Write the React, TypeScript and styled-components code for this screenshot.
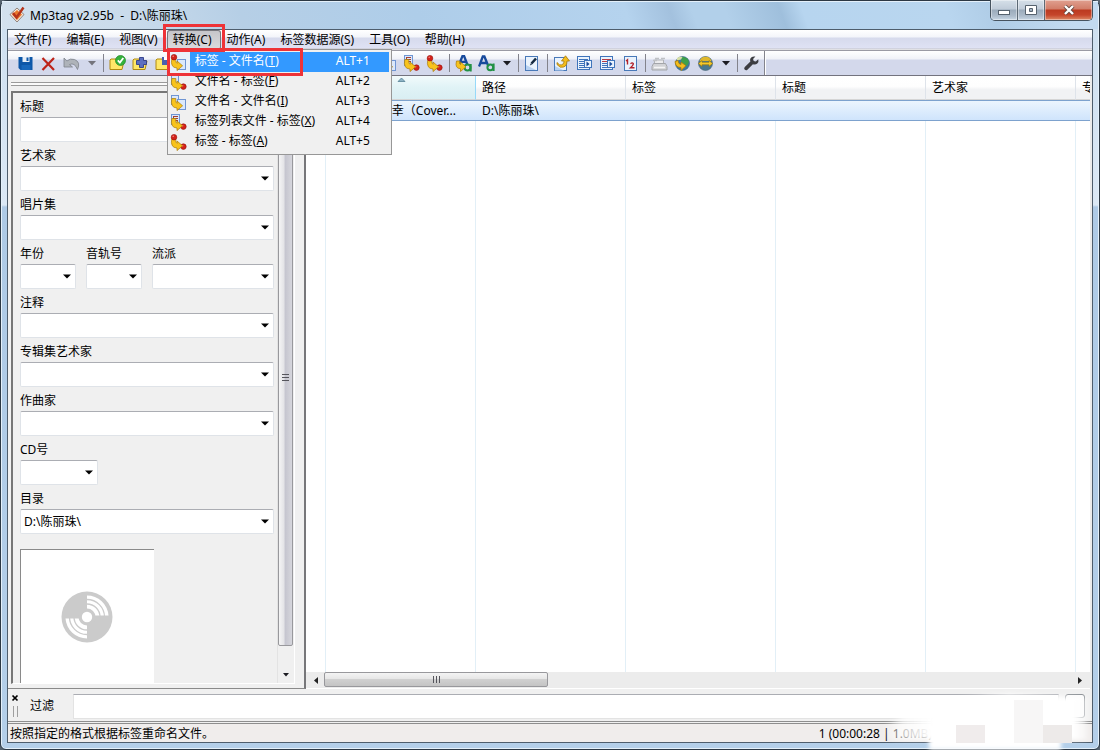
import React from "react";
import styled, { createGlobalStyle, css } from "styled-components";

const GlobalStyle = createGlobalStyle`
  *, *::before, *::after { box-sizing: border-box; }
  body {
    margin: 0;
    background: #56636f;
    color: #000;
    font: 12px/16px "Noto Sans", "Noto Sans CJK SC", sans-serif;
  }
  svg { display: block; }
  button, input, select {
    margin: 0;
    padding: 0;
    border: 0;
    border-radius: 0;
    background: none;
    color: inherit;
    font: inherit;
  }
`;

/* ---------- window frame ---------- */

const Frame = styled.div`
  position: relative;
  display: flex;
  flex-direction: column;
  min-height: 100vh;
  padding: 0 6px 6px;
  border: 1px solid #2c3844;
  border-radius: 7px 7px 6px 6px;
  background: linear-gradient(180deg, #c3d8ea 0, #cfe0f0 30px, #dbe8f5 204px, #aecae6 206px, #b4cfe9 100%);
  box-shadow: inset 0 0 0 1px #e4f0fa;
`;

const TitleBar = styled.header`
  display: flex;
  align-items: flex-start;
  height: 28px;
  margin: 0 -5px;
  padding-left: 7px;
  border-top: 1px solid #e4f0fa;
  background: linear-gradient(70deg, #d3e1ee 0, #c9dbeb 12%, #b6cfe6 22%, #aecde9 38%, #b5d3ee 57%, #a3c1de 61%, #b2d0ea 63%, #b2d0ea 66%, #9fbfdc 71%, #b7d5ef 73%, #b9d6ef 86%, #b0cde7 90%, #c2daf0 97%);
`;

const Title = styled.h1`
  flex: 1;
  margin: 0;
  padding: 4px 0 0 4px;
  font-size: 12px;
  font-weight: 400;
  line-height: 20px;
  white-space: pre;
`;

const AppIcon = styled.svg`
  margin-top: 4px;
`;

const WindowButtons = styled.div`
  display: flex;
  margin: -2px 5px 0 0;
  border: 1px solid #46535f;
  border-top: 0;
  border-radius: 0 0 5px 5px;
  overflow: hidden;
`;

const WindowButton = styled.button<{ $danger?: boolean }>`
  display: flex;
  align-items: center;
  justify-content: center;
  width: ${(p) => (p.$danger ? 47 : 27)}px;
  height: 20px;
  border-right: ${(p) => (p.$danger ? 0 : 1)}px solid #5c6975;
  background: ${(p) =>
    p.$danger
      ? "linear-gradient(180deg, #e0a090 0, #d27d69 45%, #bb3a20 50%, #c5452a 75%, #dd8a66 100%)"
      : "linear-gradient(180deg, #d6e0e9 0, #c0ccd9 45%, #9babbb 50%, #adbccb 80%, #c9d8e6 100%)"};
  box-shadow: inset 0 0 0 1px rgba(255, 255, 255, 0.4);
`;

const Client = styled.div`
  display: flex;
  flex: 1;
  flex-direction: column;
  border: 1px solid #4e5d6c;
  background: #f0f0f0;
`;

/* ---------- menu bar ---------- */

const MenuBar = styled.nav`
  display: flex;
  height: 21px;
  border-bottom: 1px solid #9a9aa4;
  background: linear-gradient(180deg, #fff 0, #f3f5fa 7px, #d6daec 8px, #dfe2f4 18px, #c3c3c9 19px, #fff 20px);
`;

const MenuSlot = styled.div`
  position: relative;
  display: flex;
`;

const MenuButton = styled.button<{ $open?: boolean }>`
  height: 20px;
  padding: 0 9px 0 6px;
  line-height: 20px;
  white-space: nowrap;
  ${(p) =>
    p.$open &&
    css`
      border-radius: 3px;
      background: linear-gradient(180deg, #c4c4c8, #dcdcdf);
      box-shadow: inset 0 0 0 1px #77777d;
    `}
`;

const DropMenu = styled.ul`
  position: absolute;
  z-index: 10;
  top: 19px;
  left: 0;
  width: 225px;
  margin: 0;
  padding: 2px 2px 2px 0;
  border: 1px solid #979797;
  background: #f0f0f0;
  list-style: none;
`;

const MenuItem = styled.li<{ $active?: boolean }>`
  position: relative;
  color: ${(p) => (p.$active ? "#fff" : "#000")};
  background: ${(p) => (p.$active ? "#3399ff" : "none")};
`;

const MenuItemButton = styled.button`
  display: grid;
  grid-template-columns: 22px 1fr 53px;
  width: 100%;
  height: 20px;
  column-gap: 5px;
  line-height: 18px;
  text-align: left;
  white-space: nowrap;
`;

const MenuIconBox = styled.span<{ $active?: boolean }>`
  display: flex;
  align-items: center;
  justify-content: center;
  height: 20px;
  background: ${(p) => (p.$active ? "#e9f0fa" : "none")};
`;

const Highlight = styled.span<{ $kind: "button" | "item" }>`
  position: absolute;
  z-index: 11;
  border: 3px solid #ee3338;
  pointer-events: none;
  ${(p) => (p.$kind === "button" ? "inset: -6px -4px -2px -4px;" : "top: -4px; left: -1px; width: 136px; height: 28px;")}
`;

/* ---------- toolbar ---------- */

const ToolBar = styled.div`
  display: flex;
  height: 25px;
  padding-left: 6px;
  border-bottom: 1px solid #73737e;
  background: linear-gradient(180deg, #fff 0, #f0f2f8 8px, #d3d8eb 9px, #d3d8eb 100%);
`;

const ToolButton = styled.button`
  display: flex;
  align-items: center;
  justify-content: center;
  width: 23px;
  height: 24px;
`;

const ToolDrop = styled(ToolButton)`
  width: 17px;
`;

const Separator = styled.span`
  width: 6px;
  height: 18px;
  margin-top: 3px;
  background: linear-gradient(90deg, transparent 3px, #83838c 3px, #83838c 4px, transparent 4px);
`;

const ToolEnd = styled.span`
  width: 2px;
  margin-left: 1px;
  border-left: 1px solid #83838c;
  background: #fff;
`;

/* ---------- tag panel ---------- */

const Body = styled.main`
  display: flex;
  flex: 1;
  min-height: 0;
`;

const Dock = styled.aside`
  display: flex;
  flex: none;
  flex-direction: column;
  width: 298px;
  padding: 6px 9px 4px 3px;
  border-right: 2px solid #77777a;
  border-bottom: 1px solid #8a8a8a;
`;

const DockGrip = styled.div`
  height: 4px;
  margin-bottom: 5px;
  border-top: 1px solid #9a9a9a;
  border-bottom: 1px solid #9a9a9a;
  background: #fbfbfb;
`;

const Panel = styled.div`
  display: flex;
  flex: 1;
  border: 2px solid #767676;
  border-right: 1px solid #fff;
  border-bottom: 1px solid #fff;
`;

const TagForm = styled.form`
  display: flex;
  flex: 1;
  flex-direction: column;
  padding: 0 3px 0 7px;
`;

const FieldRow = styled.div`
  display: flex;
  gap: 10px;
`;

const Field = styled.div<{ $width?: number }>`
  position: relative;
  flex: ${(p) => (p.$width ? `0 0 ${p.$width}px` : 1)};
`;

const FieldLabel = styled.label`
  display: block;
  height: 24px;
  padding-top: 6px;
`;

const boxStyle = css`
  display: block;
  width: 100%;
  height: 25px;
  padding: 0 3px;
  border: 1px solid #dfe3e8;
  border-top-color: #abadb3;
  border-radius: 2px;
  background: #fff;
`;

const TextInput = styled.input`
  ${boxStyle}
`;

const Combo = styled.select`
  ${boxStyle}
  appearance: none;
  padding-right: 16px;
`;

const ComboArrow = styled.svg`
  position: absolute;
  right: 5px;
  bottom: 10px;
  pointer-events: none;
`;

const Cover = styled.div`
  display: flex;
  flex: 1;
  align-items: center;
  justify-content: center;
  width: 134px;
  min-height: 134px;
  margin-top: 15px;
  padding-right: 2px;
  border-top: 1px solid #8a8a8a;
  border-left: 1px solid #8a8a8a;
  background: #fff;
`;

const VScroll = styled.div`
  display: flex;
  flex: none;
  flex-direction: column;
  width: 17px;
  padding-right: 2px;
  border-left: 1px solid #e3e3e3;
  background: #f0f0f0;
`;

const ScrollButton = styled.button`
  display: flex;
  flex: none;
  align-items: center;
  justify-content: center;
  width: 16px;
  height: 16px;
`;

const VTrack = styled.div`
  flex: 1;
  padding-bottom: 21px;
`;

const VThumb = styled.div`
  display: flex;
  align-items: center;
  justify-content: center;
  width: 15px;
  height: 100%;
  border: 1px solid #98989c;
  border-radius: 2px;
  background: linear-gradient(90deg, #f4f4f5 0, #e5e5e8 35%, #c6c6d0 50%, #d6d6dc 100%);
`;

/* ---------- file list ---------- */

const COLS = [20, 150, 150, 150, 150, 150];

const ListPane = styled.section`
  display: flex;
  flex: 1;
  flex-direction: column;
  min-width: 0;
  border-right: 2px solid #ececec;
  background: #fff;
`;

const FileTable = styled.table`
  width: 100%;
  table-layout: fixed;
  border-collapse: separate;
  border-spacing: 0;
`;

const HeadCell = styled.th<{ $sorted?: boolean }>`
  position: relative;
  height: 24px;
  padding: 0 6px;
  overflow: hidden;
  border-right: 1px solid ${(p) => (p.$sorted ? "#96d9f9" : "#dee3ea")};
  border-bottom: 1px solid #d5d5d5;
  background: ${(p) =>
    p.$sorted ? "linear-gradient(180deg, #f2fafb 0, #e0f3f6 50%, #d9eef3 100%)" : "linear-gradient(180deg, #fff 0, #fefefe 45%, #f1f2f4 60%, #f1f2f4 100%)"};
  font-weight: 400;
  line-height: 22px;
  text-align: left;
  white-space: nowrap;
  &:last-child { border-right: 0; }
`;

const SortMark = styled.svg`
  position: absolute;
  top: 1px;
  left: 71px;
`;

const Cell = styled.td`
  height: 21px;
  padding: 0 6px;
  overflow: hidden;
  border-top: 1px solid #7da2ce;
  border-bottom: 1px solid #7da2ce;
  background: linear-gradient(180deg, #ecf5fe, #cfe4fc);
  line-height: 19px;
  white-space: nowrap;
`;

const Columns = styled.div`
  display: grid;
  flex: 1;
  grid-template-columns: ${COLS.map((c) => `${c}px`).join(" ")} 1fr;
`;

const ColumnLine = styled.span`
  border-right: 1px solid #e2eff7;
`;

const HScroll = styled.div`
  display: flex;
  height: 17px;
  padding: 0 2px;
  border-bottom: 1px solid #fff;
  background: #ececec;
`;

const HTrack = styled.div`
  flex: 1;
`;

const HThumb = styled.div`
  display: flex;
  align-items: center;
  justify-content: center;
  width: 30%;
  min-width: 40px;
  height: 15px;
  border: 1px solid #98989c;
  border-radius: 2px;
  background: linear-gradient(180deg, #f4f4f4 0, #e6e6e6 45%, #d0d0d0 50%, #c4c4c4 100%);
`;

/* ---------- filter and status ---------- */

const FilterBar = styled.div`
  display: flex;
  height: 35px;
  padding: 5px 7px 0 3px;
  border-bottom: 3px double #8e8e8e;
`;

const FilterGrip = styled.div`
  display: flex;
  flex-direction: column;
  gap: 4px;
  width: 19px;
`;

const CloseButton = styled.button`
  width: 8px;
  height: 8px;
`;

const GripLines = styled.span`
  width: 5px;
  height: 11px;
  margin-left: 2px;
  border-right: 1px solid #9f9f9f;
  border-left: 1px solid #9f9f9f;
`;

const FilterLabel = styled.label`
  width: 43px;
  line-height: 24px;
`;

const FilterInput = styled.input`
  flex: 1;
  min-width: 0;
  height: 25px;
  padding: 0 4px;
  border: 1px solid #e3e3e3;
  border-top-color: #abadb3;
  background: #fff;
`;

const FilterButton = styled.button`
  width: 20px;
  height: 24px;
  margin-left: 6px;
  border: 1px solid #8a8f94;
  border-radius: 3px;
  background: #fbfbfb;
`;

const StatusBar = styled.footer`
  display: flex;
  justify-content: space-between;
  height: 18px;
  padding: 0 160px 0 2px;
  background: #f0edec;
  line-height: 20px;
  white-space: nowrap;
`;

const Veil = styled.svg`
  position: absolute;
  z-index: 5;
  right: 0;
  bottom: -1px;
  pointer-events: none;
`;

/* ---------- drawings ---------- */

const YELLOW = "#f3bd1e";
const YELLOW_EDGE = "#a87a08";

const Page = ({ x, y, w = 9, h = 10 }: { x: number; y: number; w?: number; h?: number }) => (
  <rect x={x + 0.5} y={y + 0.5} width={w - 1} height={h - 1} fill="#dbe8fb" stroke="#6f95d3" />
);
const Dot = ({ x, y }: { x: number; y: number }) => (
  <g>
    <circle cx={x} cy={y} r="2.8" fill="#d3221b" stroke="#991008" strokeWidth=".6" />
    <circle cx={x - 0.8} cy={y - 0.9} r=".8" fill="#f58a80" />
  </g>
);
const CurveArrow = () => (
  <path
    d="M1.800 4.500Q0 13.800 7 14v2.600l5.600-4.800L7 7v2.400Q5.400 9 5.800 4.500z"
    fill="#f8c31c"
    stroke={YELLOW_EDGE}
    strokeWidth=".7"
  />
);
const Folder = () => (
  <path d="M1 5 V14.5 H13 L15 6 H8 L7 4 H2 Z" fill="#ffe768" stroke="#b08a10" strokeWidth="1" />
);

type ConvertKind = "tagFile" | "fileTag" | "fileFile" | "listTag" | "tagTag";

const ConvertIcon = ({ kind }: { kind: ConvertKind }) => (
  <svg width="17" height="17" viewBox="0 0 17 17" aria-hidden="true">
    {(kind === "fileTag" || kind === "fileFile") && <Page x={1} y={1} w={8} h={10} />}
    {kind === "listTag" && (
      <g>
        <Page x={1} y={0} w={9} h={11} />
        <path d="M3 2.5h5M3 4.5h5M5 6.5h3M3.5 2v5" stroke="#a0413a" fill="none" />
      </g>
    )}
    {(kind === "tagFile" || kind === "fileFile") && <Page x={7} y={5} w={9} h={11} />}
    {kind !== "tagFile" && kind !== "fileFile" && <Dot x={13.4} y={12.6} />}
    <CurveArrow />
    {(kind === "tagFile" || kind === "tagTag") && <Dot x={4} y={3.2} />}
  </svg>
);

const Caret = ({ muted, small }: { muted?: boolean; small?: boolean }) => (
  <svg width="8" height="5" viewBox="0 0 8 5" aria-hidden="true">
    <path d={small ? "M1 0h6L4 3.5z" : "M0 0h8L4 4.5z"} fill={muted ? "#74747c" : "#1c1c22"} />
  </svg>
);

const Svg = ({ children }: { children: React.ReactNode }) => (
  <svg width="17" height="17" viewBox="0 0 17 17" aria-hidden="true">
    {children}
  </svg>
);

const icons: Record<string, React.ReactNode> = {
  save: (
    <Svg>
      <path d="M1.500 2h14v13H3.500l-2-2z" fill="#0d57a8" />
      <path d="M5.500 2h7v5h-7z" fill="#e6eef8" />
      <path d="M9.500 2.500h2v3.500h-2z" fill="#0d57a8" />
      <path d="M4.500 15v-5h9v5" fill="#1767bb" />
    </Svg>
  ),
  remove: (
    <Svg>
      <path d="M2.500 3L14 15M14 3L2.500 15" stroke="#bd2318" strokeWidth="2.200" fill="none" />
    </Svg>
  ),
  undo: (
    <Svg>
      <path d="M1 3v9h8.500L6.500 9.600Q11.500 7 14.500 14.500Q18 7 11.500 4.500Q7 3 3.900 6z" fill="#aeb3b9" stroke="#7d838b" strokeWidth=".8" />
    </Svg>
  ),
  folderCheck: (
    <Svg>
      <Folder />
      <circle cx="11.500" cy="5.500" r="5" fill="#35b23c" stroke="#1d8425" strokeWidth=".7" />
      <path d="M8.800 5.300l2.100 2.200L14.300 3" stroke="#fff" strokeWidth="1.800" fill="none" />
    </Svg>
  ),
  folderPlus: (
    <Svg>
      <Folder />
      <path d="M7.500 2.500h4v3h3v4h-3v3h-4v-3h-3v-4h3z" fill="#5d6fc0" stroke="#2f3c88" strokeWidth=".9" />
    </Svg>
  ),
  folderSave: (
    <Svg>
      <Folder />
      <rect x="7" y="2" width="8" height="8" fill="#4a5fae" />
      <rect x="9" y="2" width="4" height="3" fill="#fff" />
    </Svg>
  ),
  refresh: (
    <Svg>
      <path d="M3 9a5.500 5.500 0 0 1 10-3M14 8a5.500 5.500 0 0 1-10 3" stroke="#2b8a3a" strokeWidth="2" fill="none" />
    </Svg>
  ),
  list: (
    <Svg>
      <Page x={2} y={2} w={13} h={13} />
      <path d="M4 5.500h9M4 8.500h9M4 11.500h9" stroke="#2f62ad" />
    </Svg>
  ),
  caseConvert: (
    <Svg>
      <path d="M4 9.500L7.500 1h1.600L12.500 10M5.500 6.800h5.500" stroke="#174a9c" strokeWidth="2.300" fill="none" />
      <circle cx="12.500" cy="12.500" r="2.900" fill="none" stroke="#239145" strokeWidth="2" />
      <path d="M15.700 9v7.500" stroke="#239145" strokeWidth="2" />
      <path d="M1.500 6Q-.5 13.500 5.500 13.700v2.800l5.500-4.700L5.500 7v2.600Q4.300 9.500 4.800 6z" fill="#f8c31c" stroke={YELLOW_EDGE} strokeWidth=".7" />
    </Svg>
  ),
  caseMenu: (
    <Svg>
      <path d="M1 11.500L4.800 1.500h1.600L10.500 11.500M2.500 8h6.500" stroke="#174a9c" strokeWidth="2.300" fill="none" />
      <circle cx="12.300" cy="12.300" r="2.900" fill="none" stroke="#239145" strokeWidth="2" />
      <path d="M15.600 8.500v7.500" stroke="#239145" strokeWidth="2" />
    </Svg>
  ),
  edit: (
    <Svg>
      <rect x="1.500" y="1.500" width="12" height="14" fill="#eaf3fd" stroke="#4979b8" />
      <path d="M2 10l10 5H2z" fill="#b8d2f2" />
      <path d="M7.500 8.500L12 3.500" stroke="#14293f" strokeWidth="2.600" />
      <path d="M5.800 10.500l1.200-2.500 1.300 1.300z" fill="#14293f" />
    </Svg>
  ),
  editArrow: (
    <Svg>
      <rect x="1.500" y="2.500" width="12" height="13" fill="#eaf3fd" stroke="#4979b8" />
      <path d="M2 11l9 4.500H2z" fill="#b8d2f2" />
      <path d="M4 7.500l2.500 2.300Q11 10.500 11 6H8.500L12.500.8 16.500 6H14q.2 7-6.800 6.200L4 9.500z" fill={YELLOW} stroke={YELLOW_EDGE} strokeWidth=".8" />
    </Svg>
  ),
  copyPage: (
    <Svg>
      <rect x="1.500" y="1.500" width="12" height="13" fill="#eaf3fd" stroke="#3f74bb" />
      <path d="M3 4.500h9M3 6.500h5M3 8.500h5M3 10.500h5M3 12.500h9" stroke="#3f74bb" />
      <rect x="8.500" y="5.500" width="7" height="7" fill="#eaf3fd" stroke="#3f74bb" />
      <path d="M10.500 6.500v5l3-2.500z" fill="#174a9c" />
    </Svg>
  ),
  pastePage: (
    <Svg>
      <rect x="1.500" y="1.500" width="12" height="13" fill="#eaf3fd" stroke="#3f74bb" />
      <path d="M3 4.500h9M3 6.500h5" stroke="#b53b45" />
      <path d="M3 8.500h5M3 10.500h5M3 12.500h9" stroke="#3f74bb" />
      <rect x="8.500" y="5.500" width="7" height="7" fill="#eaf3fd" stroke="#3f74bb" />
      <path d="M10.500 6.500v5l3-2.500z" fill="#174a9c" />
    </Svg>
  ),
  numbering: (
    <Svg>
      <rect x="2.500" y="1.500" width="12" height="14" fill="#eaf3fd" stroke="#4979b8" />
      <path d="M4 6l1.500-1.300V9.500M8.500 8.700q1.800-1.600 2.800 0Q11.500 10.200 8.500 12.700h4" stroke="#b2222b" strokeWidth="1.400" fill="none" />
    </Svg>
  ),
  printer: (
    <Svg>
      <path d="M3.500 9V5h9v4" fill="#ececee" stroke="#b1b3b7" />
      <path d="M4 3.500h4M10 3.500h4M2 5.500h4" stroke="#bfc1c5" strokeWidth="1.600" />
      <path d="M2.500 8.500h12l1.500 3v3.500H1v-3.500z" fill="#d2d3d6" stroke="#a3a5a9" />
      <path d="M3 12.500h11" stroke="#f5f5f6" strokeWidth="1.500" />
    </Svg>
  ),
  globeArrow: (
    <Svg>
      <circle cx="8.500" cy="8.500" r="7" fill="#3d78a2" stroke="#375f7a" strokeWidth=".6" />
      <path d="M8 1.800q6 .2 7 5.200l-2 4-4-1-2-4z" fill="#3ea04b" />
      <path d="M3 3q3-2 5.500-1L7 4.500 3 5.500z" fill="#d6dfa5" />
      <path d="M1 6.500Q1.500 12.500 7 12.500v3l5-4.800L7 7v2.500Q4.500 9.300 4 5.500z" fill={YELLOW} stroke={YELLOW_EDGE} strokeWidth=".8" />
    </Svg>
  ),
  globe: (
    <Svg>
      <circle cx="8.500" cy="8.500" r="7" fill="#49788f" stroke="#466173" strokeWidth=".6" />
      <path d="M2.500 6Q4 1.800 8.500 1.700T14.500 6z" fill="#e0b82c" />
      <path d="M1.500 8.500l3.500-3v1.700h7V5.500l3.500 3-3.500 3V9.800H5v1.700z" fill="#f7c928" stroke="#98780f" strokeWidth=".7" />
    </Svg>
  ),
  wrench: (
    <Svg>
      <path
        d="M15.300 4.200l-2.500 2.300-2.100-.5-.6-2.100L12.400 1.600Q8.800.9 7.400 3.500q-.7 1.500 0 3.100L1.800 12q-1.200 1.300-.2 2.600 1.300 1.300 2.800.2l5.500-5.600q2.500.9 4.400-.7 1.700-1.700 1-4.300z"
        fill="#3c3d42"
      />
    </Svg>
  ),
};

const Sep = "|";
const Drop = "v";
type Tool = [id: string, label: string];

const toolItems: (Tool | string)[] = [
  ["save", "保存标签"], ["remove", "移除标签"], ["undo", "撤消"], Drop, Sep,
  ["folderCheck", "更改目录"], ["folderPlus", "添加目录"], ["folderSave", "收藏目录"], Sep,
  ["list", "播放列表"], ["refresh", "刷新"], ["list", "选择全部"], Sep,
  ["editArrow", "剪切"], ["copyPage", "复制"], ["pastePage", "粘贴"], Sep,
  ["tagFile", "标签 - 文件名"], ["fileTag", "文件名 - 标签"], ["fileFile", "文件名 - 文件名"],
  ["listTag", "标签列表文件 - 标签"], ["tagTag", "标签 - 标签"], Sep,
  ["caseConvert", "动作"], ["caseMenu", "快速动作"], Drop, Sep,
  ["edit", "扩展标签"], Sep,
  ["editArrow", "编辑"], ["copyPage", "复制标签"], ["pastePage", "粘贴标签"], ["numbering", "音轨号向导"], Sep,
  ["printer", "打印"], ["globeArrow", "标签数据源"], ["globe", "网络数据源"], Drop, Sep,
  ["wrench", "选项"],
];

const convertKinds = ["tagFile", "fileTag", "fileFile", "listTag", "tagTag"];

const menuEntries: { kind: ConvertKind; text: string; mnemonic: string; shortcut: string }[] = [
  { kind: "tagFile", text: "标签 - 文件名", mnemonic: "T", shortcut: "ALT+1" },
  { kind: "fileTag", text: "文件名 - 标签", mnemonic: "F", shortcut: "ALT+2" },
  { kind: "fileFile", text: "文件名 - 文件名", mnemonic: "I", shortcut: "ALT+3" },
  { kind: "listTag", text: "标签列表文件 - 标签", mnemonic: "X", shortcut: "ALT+4" },
  { kind: "tagTag", text: "标签 - 标签", mnemonic: "A", shortcut: "ALT+5" },
];

const menus = ["文件(F)", "编辑(E)", "视图(V)", "转换(C)", "动作(A)", "标签数据源(S)", "工具(O)", "帮助(H)"];

const ComboField = ({ id, label, width, value = "" }: { id: string; label: string; width?: number; value?: string }) => (
  <Field $width={width}>
    <FieldLabel htmlFor={id}>{label}</FieldLabel>
    <Combo id={id} defaultValue={value}>
      <option value={value}>{value}</option>
    </Combo>
    <ComboArrow width="8" height="5" viewBox="0 0 8 5" aria-hidden="true">
      <path d="M0 0.500h8L4 4.500z" fill="#000" />
    </ComboArrow>
  </Field>
);

const ConvertMenu = () => (
  <DropMenu>
    {menuEntries.map((m, i) => (
      <MenuItem key={m.kind} $active={i === 0}>
        <MenuItemButton>
          <MenuIconBox $active={i === 0}>
            <ConvertIcon kind={m.kind} />
          </MenuIconBox>
          <span>
            {m.text}(<u>{m.mnemonic}</u>)
          </span>
          <span>{m.shortcut}</span>
        </MenuItemButton>
        {i === 0 && <Highlight $kind="item" />}
      </MenuItem>
    ))}
  </DropMenu>
);

const CoverDisc = () => (
  <svg width="52" height="52" viewBox="-26 -26 52 52" aria-hidden="true">
    <circle r="25.500" fill="#cbcbcb" />
    <path d="M0 0V-21.500A21.500 21.500 0 0 1 21.500 -1.500H0zM0 0V21.500A21.500 21.500 0 0 1 -21.500 1.500H0z" fill="#fff" />
    <path
      d="M0 -17.500A17.500 17.500 0 0 1 17.500 0M0 -13A13 13 0 0 1 13 0M0 17.500A17.500 17.500 0 0 1 -17.500 0M0 13A13 13 0 0 1 -13 0"
      fill="none"
      stroke="#cbcbcb"
      strokeWidth="1.300"
    />
    <circle r="8.500" fill="#cbcbcb" />
    <circle r="5.200" fill="#fff" />
  </svg>
);

export default function App() {
  return (
    <>
      <GlobalStyle />
      <Frame>
        <TitleBar>
          <AppIcon width="17" height="17" viewBox="0 0 17 17" aria-hidden="true">
            <path d="M1 8.500L8 2l7 6.500L8 16z" fill="#f7e6d8" stroke="#7c6a60" strokeWidth=".8" />
            <path d="M3 8.500L8 4l5 4.500L8 14z" fill="#e9782b" />
            <path d="M4 7l3.500 4.500L14.500 1.500" stroke="#b5331a" strokeWidth="2.400" fill="none" />
          </AppIcon>
          <Title>{"Mp3tag v2.95b  -  D:\\陈丽珠\\"}</Title>
          <WindowButtons>
            <WindowButton aria-label="最小化">
              <svg width="13" height="9" viewBox="0 0 13 9">
                <rect x=".5" y="4.500" width="11" height="4" fill="#fff" stroke="#56626e" />
              </svg>
            </WindowButton>
            <WindowButton aria-label="最大化">
              <svg width="12" height="10" viewBox="0 0 12 10">
                <path d="M.5.500h11v9H.5zM4.500 3.500h3v3h-3z" fill="#fff" stroke="#56626e" fillRule="evenodd" />
              </svg>
            </WindowButton>
            <WindowButton $danger aria-label="关闭">
              <svg width="12" height="10" viewBox="0 0 12 10">
                <path d="M2 1l8 8M10 1L2 9" stroke="#64463f" strokeWidth="4" />
                <path d="M2 1l8 8M10 1L2 9" stroke="#fff" strokeWidth="2.400" />
              </svg>
            </WindowButton>
          </WindowButtons>
        </TitleBar>

        <Client>
          <MenuBar>
            {menus.map((m) =>
              m.startsWith("转换") ? (
                <MenuSlot key={m}>
                  <MenuButton $open>{m}</MenuButton>
                  <Highlight $kind="button" />
                  <ConvertMenu />
                </MenuSlot>
              ) : (
                <MenuButton key={m}>{m}</MenuButton>
              ),
            )}
          </MenuBar>

          <ToolBar>
            {toolItems.map((t, i) => {
              if (t === Sep) return <Separator key={i} />;
              if (t === Drop)
                return (
                  <ToolDrop key={i} aria-label="更多">
                    <Caret muted={i === 3} />
                  </ToolDrop>
                );
              const [id, label] = t as Tool;
              return (
                <ToolButton key={i} aria-label={label}>
                  {convertKinds.includes(id) ? <ConvertIcon kind={id as ConvertKind} /> : icons[id]}
                </ToolButton>
              );
            })}
            <ToolEnd />
          </ToolBar>

          <Body>
            <Dock>
              <DockGrip />
              <Panel>
                <TagForm>
                  <FieldRow>
                    <Field>
                      <FieldLabel htmlFor="title">标题</FieldLabel>
                      <TextInput id="title" type="text" />
                    </Field>
                  </FieldRow>
                  <FieldRow><ComboField id="artist" label="艺术家" /></FieldRow>
                  <FieldRow><ComboField id="album" label="唱片集" /></FieldRow>
                  <FieldRow>
                    <ComboField id="year" label="年份" width={56} />
                    <ComboField id="track" label="音轨号" width={56} />
                    <ComboField id="genre" label="流派" />
                  </FieldRow>
                  <FieldRow><ComboField id="comment" label="注释" /></FieldRow>
                  <FieldRow><ComboField id="albumArtist" label="专辑集艺术家" /></FieldRow>
                  <FieldRow><ComboField id="composer" label="作曲家" /></FieldRow>
                  <FieldRow><ComboField id="disc" label="CD号" width={78} /></FieldRow>
                  <FieldRow><ComboField id="directory" label="目录" value={"D:\\陈丽珠\\"} /></FieldRow>
                  <Cover>
                    <CoverDisc />
                  </Cover>
                </TagForm>
                <VScroll>
                  <ScrollButton aria-label="向上">
                    <svg width="7" height="4" viewBox="0 0 7 4"><path d="M0 4h7L3.500 0z" fill="#444" /></svg>
                  </ScrollButton>
                  <VTrack>
                    <VThumb>
                      <svg width="7" height="8" viewBox="0 0 7 8" aria-hidden="true">
                        <path d="M0 .5h7M0 3.500h7M0 6.500h7" stroke="#55555c" />
                      </svg>
                    </VThumb>
                  </VTrack>
                  <ScrollButton aria-label="向下">
                    <Caret small />
                  </ScrollButton>
                </VScroll>
              </Panel>
            </Dock>

            <ListPane>
              <FileTable>
                <colgroup>
                  {COLS.map((w, i) => (
                    <col key={i} width={w} />
                  ))}
                  <col />
                </colgroup>
                <thead>
                  <tr>
                    <HeadCell aria-label="状态" />
                    <HeadCell $sorted aria-sort="ascending" aria-label="文件名">
                      <SortMark width="9" height="5" viewBox="0 0 9 5" aria-hidden="true">
                        <path d="M1 4.500L4.500 1 8 4.500z" fill="#8fb4c6" stroke="#47778c" strokeWidth=".7" />
                      </SortMark>
                    </HeadCell>
                    <HeadCell>路径</HeadCell>
                    <HeadCell>标签</HeadCell>
                    <HeadCell>标题</HeadCell>
                    <HeadCell>艺术家</HeadCell>
                    <HeadCell>专</HeadCell>
                  </tr>
                </thead>
                <tbody>
                  <tr>
                    <Cell />
                    <Cell>01 - 三生有幸（Cover...</Cell>
                    <Cell>{"D:\\陈丽珠\\"}</Cell>
                    <Cell />
                    <Cell />
                    <Cell />
                    <Cell />
                  </tr>
                </tbody>
              </FileTable>
              <Columns>
                {COLS.map((_, i) => (
                  <ColumnLine key={i} />
                ))}
              </Columns>
              <HScroll>
                <ScrollButton aria-label="向左">
                  <svg width="4" height="7" viewBox="0 0 4 7"><path d="M4 0v7L0 3.500z" fill="#222" /></svg>
                </ScrollButton>
                <HTrack>
                  <HThumb>
                    <svg width="9" height="7" viewBox="0 0 9 7" aria-hidden="true">
                      <path d="M1.500 0v7M4.500 0v7M7.500 0v7" stroke="#55555c" />
                    </svg>
                  </HThumb>
                </HTrack>
                <ScrollButton aria-label="向右">
                  <svg width="4" height="7" viewBox="0 0 4 7"><path d="M0 0v7l4-3.500z" fill="#222" /></svg>
                </ScrollButton>
              </HScroll>
            </ListPane>
          </Body>

          <FilterBar>
            <FilterGrip>
              <CloseButton aria-label="关闭过滤">
                <svg width="8" height="8" viewBox="0 0 8 8">
                  <path d="M1.500 1.500l5 5M6.500 1.500l-5 5" stroke="#000" strokeWidth="1.700" />
                </svg>
              </CloseButton>
              <GripLines />
            </FilterGrip>
            <FilterLabel htmlFor="filter">过滤</FilterLabel>
            <FilterInput id="filter" type="text" />
            <FilterButton aria-label="清除过滤" />
          </FilterBar>

          <StatusBar>
            <span>按照指定的格式根据标签重命名文件。</span>
            <span>1 (00:00:28 | 1.0MB)</span>
          </StatusBar>
        </Client>

        <Veil width="220" height="60" viewBox="0 0 220 60" aria-hidden="true">
          <defs>
            <linearGradient id="veilFade" x1="0" x2="1" y1="0" y2="0">
              <stop offset="0" stopColor="#fff" stopOpacity="0" />
              <stop offset=".1" stopColor="#fff" stopOpacity=".75" />
              <stop offset=".24" stopColor="#fff" />
              <stop offset=".94" stopColor="#fff" />
              <stop offset="1" stopColor="#fff" stopOpacity=".4" />
            </linearGradient>
            <filter id="veilSoft" x="-10%" y="-20%" width="120%" height="140%">
              <feGaussianBlur stdDeviation="2" />
            </filter>
          </defs>
          <path d="M4 36Q50 8 130 4L208 8V50H10z" fill="url(#veilFade)" filter="url(#veilSoft)" />
          <rect x="50" y="36" width="132" height="24" fill="#fff" filter="url(#veilSoft)" />
          <rect x="77" y="35" width="29" height="18" fill="#f0ecec" />
          <rect x="135" y="10" width="29" height="43" fill="#f7f6f6" />
          <rect x="164" y="35" width="29" height="18" fill="#edeae9" />
        </Veil>
      </Frame>
    </>
  );
}
